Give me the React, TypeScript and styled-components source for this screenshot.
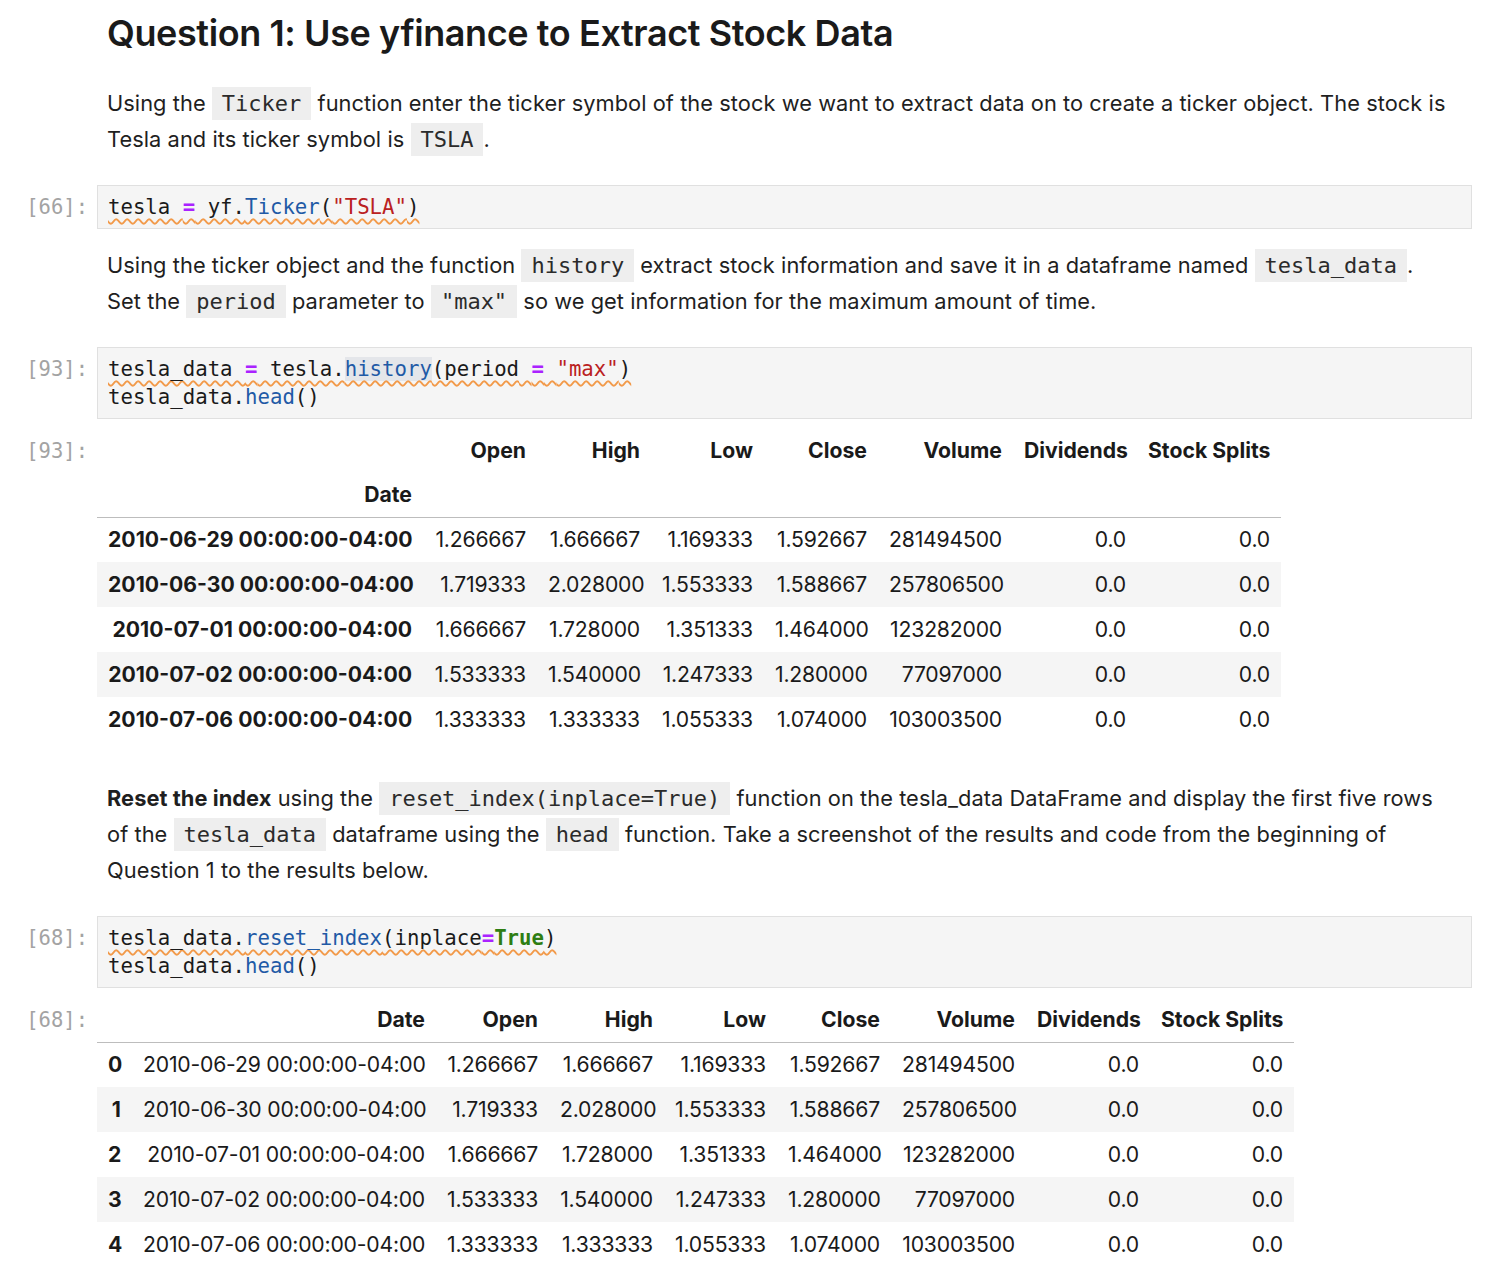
import React from "react";
import styled, { createGlobalStyle } from "styled-components";

const GlobalStyle = createGlobalStyle`
  html, body {
    margin: 0;
    padding: 0;
    background: #ffffff;
  }
  body {
    font-family: Inter, "Noto Sans", "Liberation Sans", sans-serif;
    color: #1f1f1f;
  }
`;

const MONO = `"DejaVu Sans Mono", "Liberation Mono", monospace`;

const Notebook = styled.div`
  display: flex;
  flex-direction: column;
  padding: 11px 22px 0 0;
`;

const Cell = styled.div<{ $gap: number }>`
  display: grid;
  grid-template-columns: 97px 1fr;
  margin-top: ${({ $gap }) => $gap}px;
`;

const Prompt = styled.div<{ $top: number; $lh: number }>`
  font-family: ${MONO};
  font-size: 20.5px;
  color: #a3a3a3;
  text-align: right;
  padding-right: 9px;
  padding-top: ${({ $top }) => $top}px;
  line-height: ${({ $lh }) => $lh}px;
`;

const Markdown = styled.div`
  padding: 0 10px;
`;

const Title = styled.h1`
  margin: 0;
  font-size: 36px;
  font-weight: 600;
  line-height: 44px;
  letter-spacing: -0.4px;
  color: #1a1a1a;
`;

const Para = styled.p`
  margin: 0;
  font-size: 21.8px;
  line-height: 36px;
  letter-spacing: 0.06px;
`;

const InlineCode = styled.code`
  font-family: ${MONO};
  font-size: 22px;
  line-height: 1;
  letter-spacing: 0;
  background: #eeeeee;
  padding: 4px 10px;
  color: #2b2b2b;
`;

const CodeBox = styled.div`
  background: #f5f5f5;
  border: 1px solid #e0e0e0;
  padding: 7px 10px;
  font-family: ${MONO};
  font-size: 20.7px;
  line-height: 28px;
  color: #1a1a1a;
  white-space: pre;
`;

const CodeLine = styled.div``;

const Lint = styled.span`
  text-decoration: underline wavy #f29a4a;
  text-decoration-thickness: 1.7px;
  text-underline-offset: 4px;
`;

const Tok = styled.span<{ $kind: "op" | "prop" | "str" | "kw"; $hl?: boolean }>`
  color: ${({ $kind }) =>
    $kind === "op"
      ? "#aa22ff"
      : $kind === "prop"
      ? "#1f5aa6"
      : $kind === "str"
      ? "#ba2121"
      : "#2e7d12"};
  font-weight: ${({ $kind }) => ($kind === "op" || $kind === "kw" ? 700 : 400)};
  background: ${({ $hl }) => ($hl ? "#e4e6ea" : "transparent")};
`;

const Table = styled.table<{ $w: number }>`
  width: ${({ $w }) => $w}px;
  border-collapse: collapse;
  table-layout: fixed;
  font-size: 21.2px;
  line-height: 1.2;
  color: #1a1a1a;
`;

const Col = styled.col<{ $w: number }>`
  width: ${({ $w }) => $w}px;
`;

const Head = styled.thead`
  border-bottom: 1px solid #bdbdbd;
`;

const HeadRow = styled.tr`
  height: 44px;
`;

const BodyRow = styled.tr`
  height: 45px;
  &:nth-child(even) {
    background: #f5f5f5;
  }
`;

const Th = styled.th`
  padding: 0 11px;
  text-align: right;
  font-weight: 700;
  white-space: nowrap;
`;

const Td = styled.td`
  padding: 0 11px;
  text-align: right;
  white-space: nowrap;
  letter-spacing: -0.2px;
`;

const rows = [
  ["2010-06-29 00:00:00-04:00", "1.266667", "1.666667", "1.169333", "1.592667", "281494500", "0.0", "0.0"],
  ["2010-06-30 00:00:00-04:00", "1.719333", "2.028000", "1.553333", "1.588667", "257806500", "0.0", "0.0"],
  ["2010-07-01 00:00:00-04:00", "1.666667", "1.728000", "1.351333", "1.464000", "123282000", "0.0", "0.0"],
  ["2010-07-02 00:00:00-04:00", "1.533333", "1.540000", "1.247333", "1.280000", "77097000", "0.0", "0.0"],
  ["2010-07-06 00:00:00-04:00", "1.333333", "1.333333", "1.055333", "1.074000", "103003500", "0.0", "0.0"],
];

const columns = ["Open", "High", "Low", "Close", "Volume", "Dividends", "Stock Splits"];

function IndexedTable() {
  const widths = [326, 114, 114, 113, 114, 135, 124, 144];
  return (
    <Table $w={1184}>
      <colgroup>
        {widths.map((w, i) => (
          <Col key={i} $w={w} />
        ))}
      </colgroup>
      <Head>
        <HeadRow>
          <Th />
          {columns.map((c) => (
            <Th key={c}>{c}</Th>
          ))}
        </HeadRow>
        <HeadRow>
          <Th>Date</Th>
          {columns.map((c) => (
            <Th key={c} />
          ))}
        </HeadRow>
      </Head>
      <tbody>
        {rows.map((r) => (
          <BodyRow key={r[0]}>
            <Th>{r[0]}</Th>
            {r.slice(1).map((v, i) => (
              <Td key={i}>{v}</Td>
            ))}
          </BodyRow>
        ))}
      </tbody>
    </Table>
  );
}

function ResetTable() {
  const widths = [35, 304, 113, 115, 113, 114, 135, 124, 144];
  return (
    <Table $w={1197}>
      <colgroup>
        {widths.map((w, i) => (
          <Col key={i} $w={w} />
        ))}
      </colgroup>
      <Head>
        <HeadRow>
          <Th />
          <Th>Date</Th>
          {columns.map((c) => (
            <Th key={c}>{c}</Th>
          ))}
        </HeadRow>
      </Head>
      <tbody>
        {rows.map((r, idx) => (
          <BodyRow key={r[0]}>
            <Th>{idx}</Th>
            {r.map((v, i) => (
              <Td key={i}>{v}</Td>
            ))}
          </BodyRow>
        ))}
      </tbody>
    </Table>
  );
}

export default function App() {
  return (
    <>
      <GlobalStyle />
      <Notebook>
        <Cell $gap={0}>
          <div />
          <Markdown>
            <Title>Question 1: Use yfinance to Extract Stock Data</Title>
          </Markdown>
        </Cell>

        <Cell $gap={30}>
          <div />
          <Markdown>
            <Para>
              Using the <InlineCode>Ticker</InlineCode> function enter the ticker symbol of the stock we want to
              extract data on to create a ticker object. The stock is Tesla and its ticker symbol is{" "}
              <InlineCode>TSLA</InlineCode>.
            </Para>
          </Markdown>
        </Cell>

        <Cell $gap={28}>
          <Prompt $top={8} $lh={28}>[66]:</Prompt>
          <CodeBox>
            <CodeLine>
              <Lint>
                tesla <Tok $kind="op">=</Tok> yf.<Tok $kind="prop">Ticker</Tok>(<Tok $kind="str">"TSLA"</Tok>)
              </Lint>
            </CodeLine>
          </CodeBox>
        </Cell>

        <Cell $gap={18}>
          <div />
          <Markdown>
            <Para>
              Using the ticker object and the function <InlineCode>history</InlineCode> extract stock information
              and save it in a dataframe named <InlineCode>tesla_data</InlineCode>.
              <br />
              Set the <InlineCode>period</InlineCode> parameter to <InlineCode>"max"</InlineCode> so we get
              information for the maximum amount of time.
            </Para>
          </Markdown>
        </Cell>

        <Cell $gap={28}>
          <Prompt $top={8} $lh={28}>[93]:</Prompt>
          <CodeBox>
            <CodeLine>
              <Lint>
                tesla_data <Tok $kind="op">=</Tok> tesla.<Tok $kind="prop" $hl>history</Tok>(period{" "}
                <Tok $kind="op">=</Tok> <Tok $kind="str">"max"</Tok>)
              </Lint>
            </CodeLine>
            <CodeLine>
              tesla_data.<Tok $kind="prop">head</Tok>()
            </CodeLine>
          </CodeBox>
        </Cell>

        <Cell $gap={10}>
          <Prompt $top={0} $lh={44}>[93]:</Prompt>
          <div>
            <IndexedTable />
          </div>
        </Cell>

        <Cell $gap={38}>
          <div />
          <Markdown>
            <Para>
              <b>Reset the index</b> using the <InlineCode>reset_index(inplace=True)</InlineCode> function on the
              tesla_data DataFrame and display the first five rows {"of\u00a0the\u00a0"}
              <InlineCode>tesla_data</InlineCode> dataframe using the <InlineCode>head</InlineCode> function. Take a
              screenshot of the results and code from the beginning of {"Question\u00a01"} to the results below.
            </Para>
          </Markdown>
        </Cell>

        <Cell $gap={28}>
          <Prompt $top={8} $lh={28}>[68]:</Prompt>
          <CodeBox>
            <CodeLine>
              <Lint>
                tesla_data.<Tok $kind="prop">reset_index</Tok>(inplace<Tok $kind="op">=</Tok>
                <Tok $kind="kw">True</Tok>)
              </Lint>
            </CodeLine>
            <CodeLine>
              tesla_data.<Tok $kind="prop">head</Tok>()
            </CodeLine>
          </CodeBox>
        </Cell>

        <Cell $gap={10}>
          <Prompt $top={0} $lh={44}>[68]:</Prompt>
          <div>
            <ResetTable />
          </div>
        </Cell>
      </Notebook>
    </>
  );
}
